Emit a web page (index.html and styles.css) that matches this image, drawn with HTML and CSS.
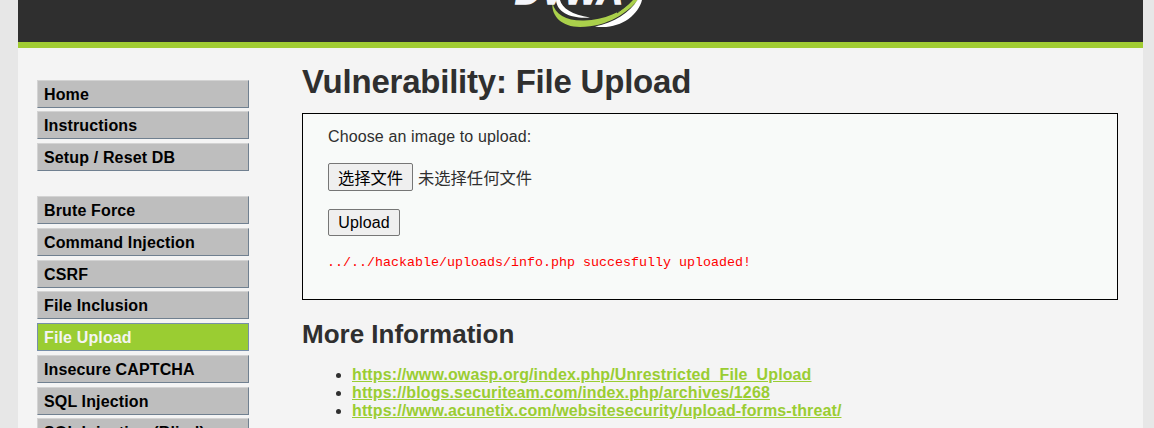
FILE: index.html
```
<!DOCTYPE html>
<html lang="en">
<head>
<meta charset="utf-8">
<title>Vulnerability: File Upload</title>
<link rel="stylesheet" href="styles.css">
</head>
<body>
<div class="container">
  <header class="header">
    <svg class="logo" width="200" height="42" viewBox="480 0 200 42">
      <path d="M560 0 C562 8 572 15 590 17.5 C572 19 557 13 556 0Z" fill="#fff"/>
      <path d="M552.5 3 C555 15 567 21 584 20.5 C604 20 623 12 633 0 L638 0 C628 12 608 27 580 27 C562 27 551 16 552.5 3Z" fill="#aad04b"/>
      <path d="M617 13 C624 8 628 4 630 0" fill="none" stroke="#2f2f2f" stroke-width="1"/>
      <path d="M642 0 C638 16 619 30 595 26.5 C614 23 630 12 637.5 0Z" fill="#fff"/>
      <text class="logo-text" x="515" y="3.5" textLength="108" lengthAdjust="spacingAndGlyphs">DVWA</text>
    </svg>
  </header>
  <div class="columns">
    <nav class="menu">
      <ul class="menu-block">
        <li class="item">Home</li>
        <li class="item">Instructions</li>
        <li class="item">Setup / Reset DB</li>
      </ul>
      <ul class="menu-block">
        <li class="item">Brute Force</li>
        <li class="item">Command Injection</li>
        <li class="item">CSRF</li>
        <li class="item">File Inclusion</li>
        <li class="item selected">File Upload</li>
        <li class="item">Insecure CAPTCHA</li>
        <li class="item">SQL Injection</li>
        <li class="item">SQL Injection (Blind)</li>
      </ul>
    </nav>
    <main class="body">
      <h1 class="title">Vulnerability: File Upload</h1>
      <section class="panel">
        <p class="prompt">Choose an image to upload:</p>
        <div class="file-row"><button class="btn choose" type="button">选择文件</button><span class="file-name">未选择任何文件</span></div>
        <button class="btn upload" type="button">Upload</button>
        <pre class="message">../../hackable/uploads/info.php succesfully uploaded!</pre>
      </section>
      <h2 class="subtitle">More Information</h2>
      <ul class="links">
        <li><a class="link" href="#">https://www.owasp.org/index.php/Unrestricted_File_Upload</a></li>
        <li><a class="link" href="#">https://blogs.securiteam.com/index.php/archives/1268</a></li>
        <li><a class="link" href="#">https://www.acunetix.com/websitesecurity/upload-forms-threat/</a></li>
      </ul>
    </main>
  </div>
</div>
</body>
</html>
```
FILE: styles.css
```
* { box-sizing: border-box; }
html, body { height: 100%; overflow: hidden; }
body {
  margin: 0;
  background: #e7e7e7;
  color: #2f2f2f;
  font: 16px/18px "Liberation Sans", Arial, "Noto Sans CJK SC", sans-serif;
}
.container {
  width: 1125px;
  height: 428px;
  margin-left: 18px;
  background: #f4f4f4;
  overflow: hidden;
}
.header {
  height: 48px;
  background: #2f2f2f;
  border-bottom: 6px solid #a1cc33;
}
.logo { display: block; margin-left: 462px; }
.logo-text {
  font: italic bold 40px "Liberation Sans", Arial, sans-serif;
  fill: #f4f5fa;
  stroke: #f4f5fa;
  stroke-width: 1.5px;
}
.columns { display: flex; }
.menu {
  width: 284px;
  flex: none;
  padding: 31.6px 0 0 19px;
}
.menu-block {
  list-style: none;
  margin: 0 0 25.1px;
  padding: 0;
  display: grid;
  gap: 3.75px;
}
.item {
  width: 212px;
  height: 28px;
  padding: 5px 6px 3px;
  border: 1px solid;
  border-color: #d3d3d3 #708090 #708090 #d3d3d3;
  background: #bebebe;
  color: #000;
  font-weight: bold;
  letter-spacing: .14px;
  white-space: nowrap;
}
.selected {
  background: #9acd32;
  border-color: #778fa9;
  color: #f4f4f4;
}
.body { width: 816px; }
.title { margin: 15px 0 12px; font-size: 33px; line-height: 38px; letter-spacing: -.22px; }
.panel {
  height: 187px;
  padding: 14px 25px;
  border: 1px solid #000;
  background: #f8faf9;
}
.prompt { margin: 0 0 17px; letter-spacing: .12px; }
.file-row { display: flex; gap: 5px; align-items: center; height: 28px; margin-bottom: 18px; }
.file-name { padding-top: 2px; font-size: 16.3px; }
.btn {
  display: block;
  padding: 0;
  border: 1px solid #767676;
  border-radius: 2px;
  background: #efefef;
  color: #000;
  font: inherit;
}
.choose { width: 85px; height: 28px; padding-top: 2px; font-size: 16.3px; }
.upload { width: 72px; height: 27px; letter-spacing: .1px; }
.message {
  margin: 19px 0 0 -1px;
  color: #f00;
  font: 13.33px/16px "Liberation Mono", "Courier New", monospace;
}
.subtitle { margin: 19px 0 16px; font-size: 26px; line-height: 31px; }
.links { margin: 0; padding-left: 50px; }
.link { color: #9acd32; font-weight: bold; letter-spacing: .12px; }
```
